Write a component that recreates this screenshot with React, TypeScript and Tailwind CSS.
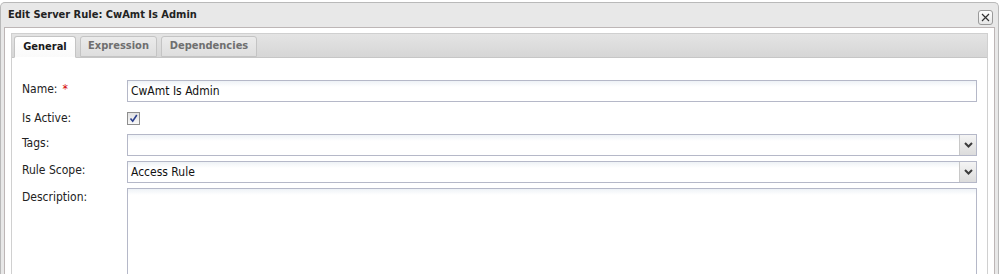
const fontCls = "font-[family-name:'DejaVu_Sans_Condensed','Liberation_Sans',sans-serif]";

function TextInput({ value }: { value?: string }) {
  return (
    <div className="h-[22px] flex-1 border border-[#b5b8c8] bg-[linear-gradient(#eef2f6,#ffffff_6px)] pl-[3px] flex items-center text-[12px] text-[#111]">
      {value}
    </div>
  );
}

function Chevron() {
  return (
    <svg width="9" height="6" viewBox="0 0 9 6">
      <path d="M1 1 L4.5 4.5 L8 1" stroke="#3c3c3c" strokeWidth="2" fill="none" />
    </svg>
  );
}

function SelectInput({ value }: { value?: string }) {
  return (
    <div className="h-[22px] flex-1 border border-[#b5b8c8] bg-[linear-gradient(#eef2f6,#ffffff_6px)] flex text-[12px] text-[#111]">
      <div className="flex-1 pl-[3px] flex items-center">{value}</div>
      <div className="w-[17px] border-l border-[#c8c8c8] bg-[linear-gradient(#f4f4f4,#dcdcdc)] flex items-center justify-center">
        <Chevron />
      </div>
    </div>
  );
}

function Row({
  label,
  required,
  labelCls = "pt-[2px]",
  children,
}: {
  label: string;
  required?: boolean;
  labelCls?: string;
  children: React.ReactNode;
}) {
  return (
    <div className="flex mb-[5px]">
      <div className={`w-[105px] text-[12px] leading-[15px] text-[#222] ${labelCls}`}>
        {label}
        {required && <span className="text-[#d40000] ml-[5px]">*</span>}
      </div>
      {children}
    </div>
  );
}

const tabs = [
  { name: "General", w: "w-[62px]", active: true },
  { name: "Expression", w: "w-[77px]", active: false },
  { name: "Dependencies", w: "w-[96px]", active: false },
];

export default function App() {
  return (
    <div className={`h-[274px] w-[1001px] overflow-hidden bg-white pt-[2px] ${fontCls}`}>
      <div className="w-[999px] rounded-t-[5px] border border-b-0 border-[#b9b9b9] bg-[#e8e8e8] px-[3px]">
        {/* header */}
        <div className="h-[24px] flex items-center justify-between pl-[4px] pr-[2px]">
          <span className="text-[11px] font-bold text-[#222]">Edit Server Rule: CwAmt Is Admin</span>
          <button className="w-[15px] h-[15px] mt-[4px] rounded-[3px] border border-[#9a9a9a] bg-[linear-gradient(#ffffff,#e6e6e6)] flex items-center justify-center">
            <svg width="9" height="9" viewBox="0 0 9 9">
              <path d="M1 1 L8 8 M8 1 L1 8" stroke="#333" strokeWidth="1.2" />
            </svg>
          </button>
        </div>
        {/* body */}
        <div className="border border-[#bdb6b6] bg-white pt-[5px] px-[6px] h-[300px]">
          <div className="border-l border-r border-[#d0d0d0]">
            {/* tab strip */}
            <div className="h-[25px] border-t border-[#d0d0d0] border-b border-b-[#c6c6c6] bg-[linear-gradient(#e4e4e4,#d6d6d6)] flex items-end gap-[4px] pl-[2px]">
              {tabs.map((t) => (
                <div
                  key={t.name}
                  className={`${t.w} rounded-t-[3px] border border-[#c4c4c4] text-[11px] font-bold flex items-center justify-center ${
                    t.active
                      ? "h-[22px] -mb-px border-b-white bg-[linear-gradient(#ffffff,#fafafa)] text-[#1a1a1a]"
                      : "h-[21px] bg-[linear-gradient(#ebebeb,#dedede)] text-[#6f6f6f]"
                  }`}
                >
                  {t.name}
                </div>
              ))}
            </div>
            {/* form */}
            <div className="pt-[22px] pl-[10px] pr-[10px]">
              <Row label="Name:" required>
                <TextInput value="CwAmt Is Admin" />
              </Row>
              <Row label="Is Active:" labelCls="pt-[4px]">
                <div className="flex-1 h-[22px]">
                  <div className="w-[13px] h-[13px] mt-[5px] border border-[#8e8e8e] bg-[linear-gradient(#e2e2e2,#f8f8f8)] flex items-center justify-center">
                    <svg width="9" height="9" viewBox="0 0 9 9">
                      <path d="M1.5 4.5 L3.7 7.2 L7.8 1" stroke="#2b3f8c" strokeWidth="1.6" fill="none" />
                    </svg>
                  </div>
                </div>
              </Row>
              <Row label="Tags:">
                <SelectInput />
              </Row>
              <Row label="Rule Scope:">
                <SelectInput value="Access Rule" />
              </Row>
              <Row label="Description:">
                <div className="h-[120px] flex-1 border border-[#b5b8c8] bg-[linear-gradient(#eef2f6,#ffffff_6px)]" />
              </Row>
            </div>
          </div>
        </div>
      </div>
    </div>
  );
}
